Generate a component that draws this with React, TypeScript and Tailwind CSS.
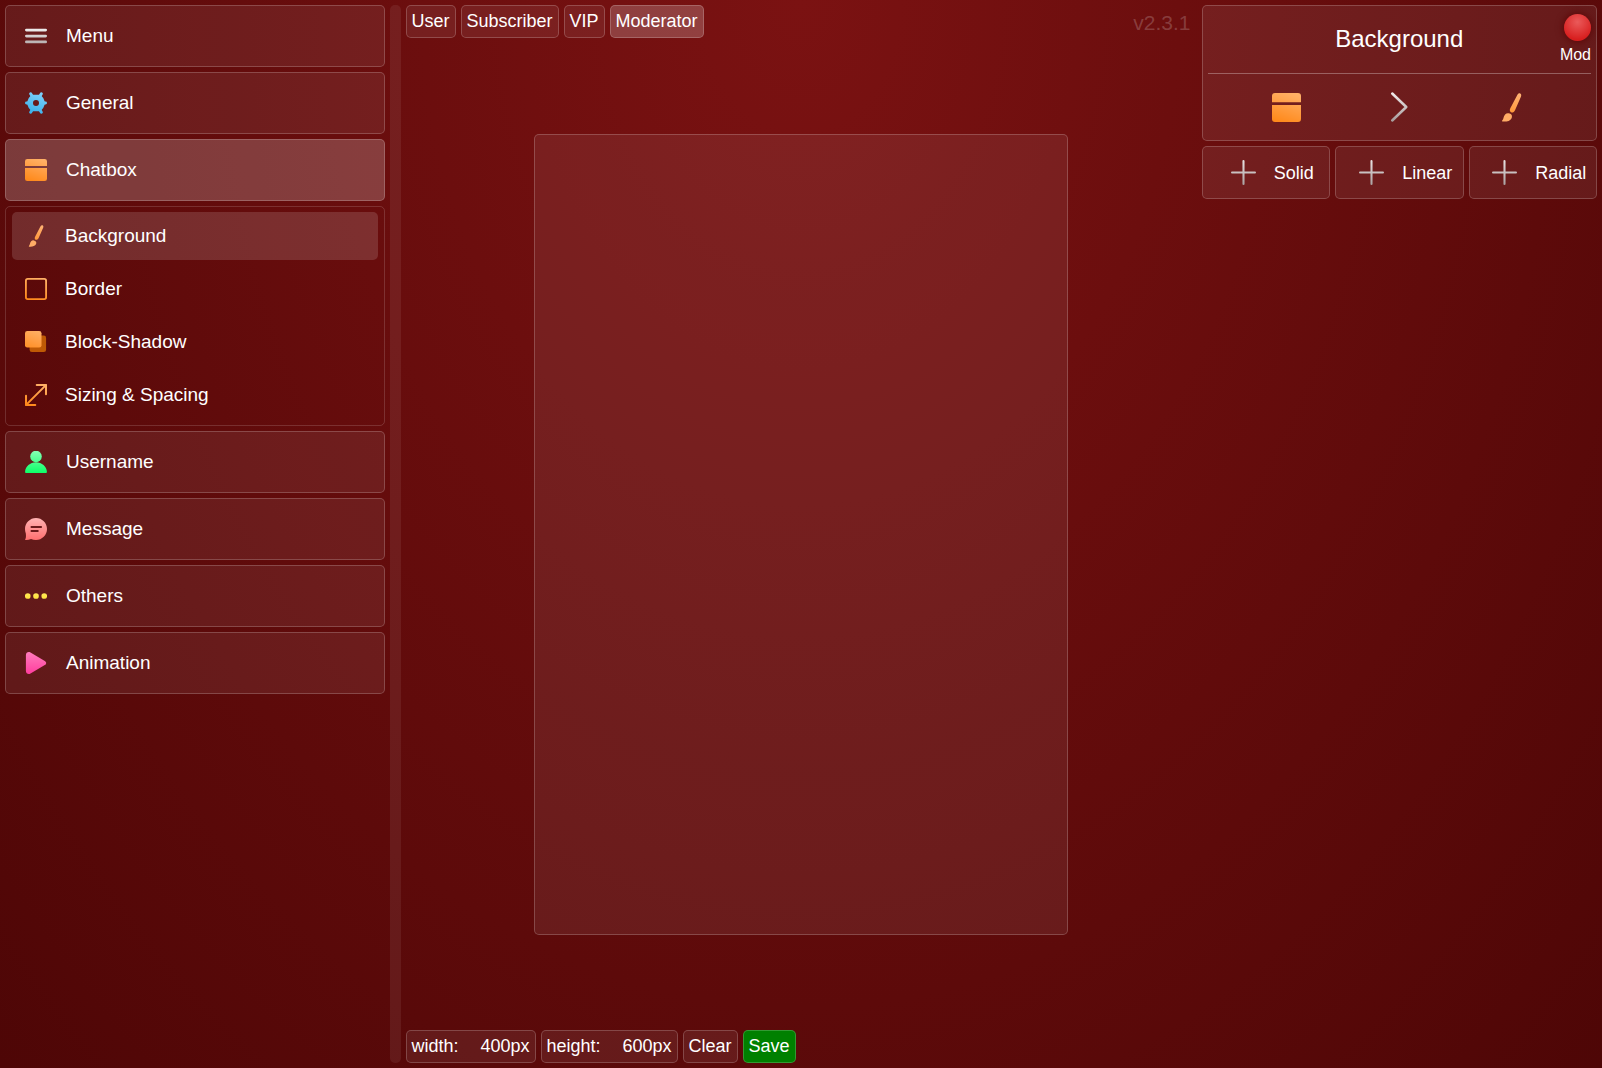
import React from "react";

type IconProps = { className?: string };

function Gradient({ id, from, to, vertical }: { id: string; from: string; to: string; vertical?: boolean }) {
  return (
    <defs>
      <linearGradient id={id} gradientUnits="userSpaceOnUse" x1={vertical ? 12 : 16} y1="0" x2={vertical ? 12 : 8} y2="24">
        <stop offset="0" stopColor={from} />
        <stop offset="1" stopColor={to} />
      </linearGradient>
    </defs>
  );
}

const svgProps = { viewBox: "0 0 24 24", fill: "none", "aria-hidden": true } as const;

function MenuIcon({ className }: IconProps) {
  return (
    <svg {...svgProps} className={className}>
      <Gradient id="menu-g" from="#ffffff" to="#a9a0a0" vertical />
      <g fill="url(#menu-g)">
        <rect x="0" y="4" width="24" height="3" rx="1.5" />
        <rect x="0" y="10.5" width="24" height="3" rx="1.5" />
        <rect x="0" y="17" width="24" height="3" rx="1.5" />
      </g>
    </svg>
  );
}

function GearIcon({ className }: IconProps) {
  return (
    <svg {...svgProps} className={className}>
      <Gradient id="gear-g" from="#7fd0fa" to="#38b0ea" />
      <g stroke="url(#gear-g)" strokeWidth="3.2" strokeLinecap="round">
        <path d="M1.6 12L22.4 12.01" />
        <path d="M6.2 2L17.8 22" />
        <path d="M17.8 2L6.2 22" />
      </g>
      <g stroke="url(#gear-g)" strokeWidth="1.8" strokeLinejoin="round" fill="url(#gear-g)">
        <path d="M7.6 3.9H16.4L19.2 7.2L21.2 12L19.2 16.8L16.4 20.1H7.6L4.8 16.8L2.8 12L4.8 7.2Z" />
      </g>
      <circle cx="12" cy="12" r="3.3" fill="#681a1b" />
    </svg>
  );
}

function ChatboxIcon({ className, id = "box-g" }: IconProps & { id?: string }) {
  return (
    <svg {...svgProps} className={className}>
      <Gradient id={id} from="#ffb066" to="#ff8a1c" />
      <path fill={`url(#${id})`} d="M2.5 0H21.5Q24 0 24 2.5V7.7H0V2.5Q0 0 2.5 0Z" />
      <path fill={`url(#${id})`} d="M0 9.9H24V21.5Q24 24 21.5 24H2.5Q0 24 0 21.5Z" />
    </svg>
  );
}

function BrushIcon({ className, id = "brush-g" }: IconProps & { id?: string }) {
  return (
    <svg {...svgProps} className={className}>
      <Gradient id={id} from="#ffb273" to="#ff8a1c" />
      <path
        fill={`url(#${id})`}
        d="M16.8 1.6C17.4.4 18.4 0 19.2.4C20.1.9 20.3 1.9 19.8 3L14.9 14.3C14.1 15.9 12.8 16.6 11.6 16C10.5 15.4 10.3 14 11 12.7Z"
      />
      <path fill="#ffac66" d="M9.6 16.8C11.8 17 13 18.7 12.1 20.8C11 23.3 7.6 23.9 4.5 23.6C4.1 23.5 4 23.1 4.3 22.8C5.8 21.5 5 19.6 6.7 17.8C7.5 17 8.5 16.6 9.6 16.8Z" />
    </svg>
  );
}

function BorderIcon({ className }: IconProps) {
  return (
    <svg {...svgProps} className={className}>
      <Gradient id="border-g" from="#ffb066" to="#ff8a1c" />
      <rect x="1" y="1" width="22" height="22" rx="2" stroke="url(#border-g)" strokeWidth="2" />
    </svg>
  );
}

function ShadowIcon({ className }: IconProps) {
  return (
    <svg {...svgProps} className={className}>
      <Gradient id="shadow-g" from="#ffb066" to="#ff8a1c" />
      <rect x="5" y="5" width="18" height="18" rx="2.5" fill="#bf5a05" />
      <rect x="0" y="0" width="18" height="18" rx="2.5" fill="url(#shadow-g)" />
    </svg>
  );
}

function ResizeIcon({ className }: IconProps) {
  return (
    <svg {...svgProps} className={className}>
      <Gradient id="resize-g" from="#ffb066" to="#ff8a1c" />
      <g stroke="url(#resize-g)" strokeWidth="2.2" strokeLinecap="round" strokeLinejoin="round">
        <path d="M1.2 22.8L22.8 1.2" />
        <path d="M12.8 1.1H22.9V11.2" />
        <path d="M1.1 12.8V22.9H11.2" />
      </g>
    </svg>
  );
}

function UserIcon({ className }: IconProps) {
  return (
    <svg {...svgProps} className={className}>
      <Gradient id="user-g" from="#86ffb4" to="#0dff68" vertical />
      <circle cx="12" cy="6" r="6.3" fill="url(#user-g)" />
      <path fill="url(#user-g)" d="M12 12.3C18.4 12.3 23.6 17 23.9 22.6C24 23.6 23.4 24 22.6 24H1.4C.6 24 0 23.6.1 22.6C.4 17 5.6 12.3 12 12.3Z" />
    </svg>
  );
}

function MessageIcon({ className }: IconProps) {
  return (
    <svg {...svgProps} className={className}>
      <Gradient id="msg-g" from="#ffb3b3" to="#ff6f6f" vertical />
      <path
        fill="url(#msg-g)"
        d="M12 0C18.6 0 24 5.4 24 12C24 18.6 18.6 24 12 24C9.9 24 8.2 23.6 6.6 22.8C4.6 23.7 2.6 24 .7 23.9C.2 23.9 0 23.5.3 23.1C1.1 21.9 1.2 19.6.9 16.8C.3 15.2 0 13.7 0 12C0 5.4 5.4 0 12 0Z"
      />
      <path d="M7 9.8H17.6M7 14.2H14" stroke="#6a1a1b" strokeWidth="2" strokeLinecap="round" />
    </svg>
  );
}

function DotsIcon({ className }: IconProps) {
  return (
    <svg {...svgProps} className={className}>
      <Gradient id="dots-g" from="#fff07a" to="#ffd91a" vertical />
      <g fill="url(#dots-g)">
        <circle cx="3" cy="12" r="3.1" />
        <circle cx="12" cy="12" r="3.1" />
        <circle cx="21" cy="12" r="3.1" />
      </g>
    </svg>
  );
}

function PlayIcon({ className }: IconProps) {
  return (
    <svg {...svgProps} className={className}>
      <Gradient id="play-g" from="#ff7cbc" to="#ff3d9e" vertical />
      <path
        fill="url(#play-g)"
        d="M1 3.4C1 .6 3.6-.8 6 .6L21.6 9.7C23.6 10.9 23.6 13.1 21.6 14.3L6 23.4C3.6 24.8 1 23.4 1 20.6Z"
      />
    </svg>
  );
}

function ChevronIcon({ className }: IconProps) {
  return (
    <svg {...svgProps} className={className}>
      <Gradient id="chev-g" from="#f4eeee" to="#a39a9a" vertical />
      <path d="M6.6 1.2L17.8 12L6.6 22.8" stroke="url(#chev-g)" strokeWidth="2" strokeLinecap="round" strokeLinejoin="round" />
    </svg>
  );
}

function PlusIcon({ className }: IconProps) {
  return (
    <svg {...svgProps} className={className}>
      <Gradient id="plus-g" from="#e9e2e2" to="#a9a0a0" vertical />
      <g fill="url(#plus-g)">
        <rect x="11" y="0" width="2" height="24" rx="1" />
        <rect x="0" y="11" width="24" height="2" rx="1" />
      </g>
    </svg>
  );
}

const panel = "rounded-[5px] border border-white/20 bg-white/7";

function NavItem({ icon: Icon, label, active }: { icon: React.FC<IconProps>; label: string; active?: boolean }) {
  return (
    <button
      type="button"
      className={`flex h-[62px] w-full items-center gap-[19px] rounded-[5px] border pl-[19px] text-[19px] leading-6 ${
        active ? "border-white/20 bg-white/20" : "border-white/20 bg-white/7"
      }`}
    >
      <Icon className="size-[22px] shrink-0" />
      {label}
    </button>
  );
}

function SubItem({ icon: Icon, label, active }: { icon: React.FC<IconProps>; label: string; active?: boolean }) {
  return (
    <button
      type="button"
      className={`flex h-12 w-full items-center gap-[18px] rounded-[5px] pl-[13px] text-[19px] leading-6 ${
        active ? "bg-white/14" : ""
      }`}
    >
      <Icon className="size-[22px] shrink-0" />
      {label}
    </button>
  );
}

function RoleButton({ label, active }: { label: string; active?: boolean }) {
  return (
    <button
      type="button"
      className={`h-[33px] rounded-[5px] border px-[5px] pb-[2px] text-[18px] leading-6 ${
        active ? "border-white/20 bg-white/20" : "border-white/20 bg-white/7"
      }`}
    >
      {label}
    </button>
  );
}

function SizeField({ id, label, value }: { id: string; label: string; value: string }) {
  return (
    <div className={`flex h-[33px] items-center px-[5px] pb-[2px] text-[18px] leading-6 ${panel}`}>
      <label htmlFor={id}>{label}</label>
      <input id={id} type="text" defaultValue={value} className="w-[71px] bg-transparent text-right outline-none" />
    </div>
  );
}

function AddButton({ label }: { label: string }) {
  return (
    <button type="button" className={`flex h-[53px] flex-1 items-center justify-center text-[18px] leading-6 ${panel}`}>
      <PlusIcon className="mr-[18px] ml-[13px] size-[25px] shrink-0" />
      {label}
    </button>
  );
}

export default function App() {
  return (
    <div className="grid min-h-screen grid-cols-[1fr_2fr_1fr] bg-[radial-gradient(ellipse_at_50%_0%,#7b1212_0%,#4e0606_100%)] font-['Liberation_Sans',Arial,sans-serif] text-white">
      <aside className="flex gap-[5px] py-[5px] pl-[5px]">
        <nav className="flex min-w-0 flex-1 flex-col gap-[5px]">
          <NavItem icon={MenuIcon} label="Menu" />
          <NavItem icon={GearIcon} label="General" />
          <NavItem icon={ChatboxIcon} label="Chatbox" active />
          <div className="flex flex-col gap-[5px] rounded-[5px] border border-white/15 px-[6px] pt-[5px] pb-[6px]">
            <SubItem icon={BrushIcon} label="Background" active />
            <SubItem icon={BorderIcon} label="Border" />
            <SubItem icon={ShadowIcon} label="Block-Shadow" />
            <SubItem icon={ResizeIcon} label="Sizing & Spacing" />
          </div>
          <NavItem icon={UserIcon} label="Username" />
          <NavItem icon={MessageIcon} label="Message" />
          <NavItem icon={DotsIcon} label="Others" />
          <NavItem icon={PlayIcon} label="Animation" />
        </nav>
        <div className="w-[11px] rounded-[5px] bg-white/7" />
      </aside>

      <main className="flex flex-col p-[5px]">
        <header className="flex items-start justify-between">
          <div className="flex gap-[5px]">
            <RoleButton label="User" />
            <RoleButton label="Subscriber" />
            <RoleButton label="VIP" />
            <RoleButton label="Moderator" active />
          </div>
          <span className="pt-[6px] pr-[6px] text-[21px] leading-6 text-white/20">v2.3.1</span>
        </header>

        <section aria-label="Preview" className="flex flex-1 items-center justify-center">
          <div className={`aspect-[2/3] w-[534px] ${panel}`} />
        </section>

        <footer className="flex gap-[5px]">
          <SizeField id="box-width" label="width:" value="400px" />
          <SizeField id="box-height" label="height:" value="600px" />
          <RoleButton label="Clear" />
          <button
            type="button"
            className="h-[33px] rounded-[5px] border border-white/20 bg-[#008000] px-[5px] pb-[2px] text-[18px] leading-6"
          >
            Save
          </button>
        </footer>
      </main>

      <aside className="flex flex-col gap-[5px] py-[5px] pr-[5px]">
        <section className={`relative px-[5px] ${panel}`}>
          <h1 className="flex h-[68px] items-center justify-center border-b border-white/30 pb-[2px] text-[24px] leading-8">
            Background
          </h1>
          <button type="button" className="absolute top-[8px] right-[5px] flex flex-col items-end text-[16px] leading-5">
            <span className="mb-[4px] size-[27px] rounded-full bg-[radial-gradient(circle_at_50%_30%,#ea5a5a,#d81e1e_75%)] shadow-[0_0_6px_2px_rgba(90,0,0,0.6)]" />
            Mod
          </button>
          <div className="flex justify-evenly">
            <button type="button" aria-label="Chatbox" className="flex size-[66px] items-center justify-center">
              <ChatboxIcon id="crumb-box" className="size-[29px]" />
            </button>
            <span className="flex size-[66px] items-center justify-center">
              <ChevronIcon className="size-[30px]" />
            </span>
            <button type="button" aria-label="Background" className="flex size-[66px] items-center justify-center">
              <BrushIcon id="crumb-brush" className="size-[29px]" />
            </button>
          </div>
        </section>
        <div className="flex gap-[5px]">
          <AddButton label="Solid" />
          <AddButton label="Linear" />
          <AddButton label="Radial" />
        </div>
      </aside>
    </div>
  );
}
